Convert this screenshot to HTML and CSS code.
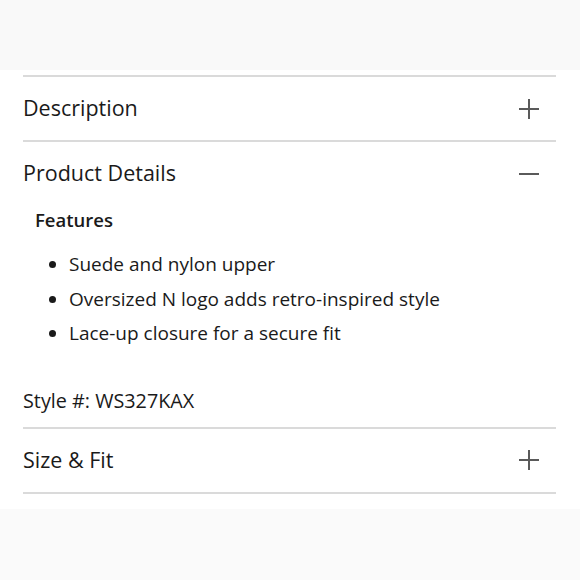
FILE: index.html
```html
<!DOCTYPE html>
<html lang="en">
<head>
<meta charset="utf-8">
<link rel="stylesheet" href="styles.css">
</head>
<body>
<div class="top"></div>
<div class="panel">
  <div class="item">
    <div class="head"><span class="title">Description</span><span class="icon plus"></span></div>
  </div>
  <div class="item">
    <div class="head"><span class="title">Product Details</span><span class="icon minus"></span></div>
    <div class="body">
      <h3 class="feat">Features</h3>
      <ul class="list">
        <li>Suede and nylon upper</li>
        <li>Oversized N logo adds retro-inspired style</li>
        <li>Lace-up closure for a secure fit</li>
      </ul>
      <p class="style">Style #: WS327KAX</p>
    </div>
  </div>
  <div class="item last">
    <div class="head"><span class="title">Size &amp; Fit</span><span class="icon plus"></span></div>
  </div>
</div>
</body>
</html>
```
FILE: styles.css
```css
html, body { margin: 0; padding: 0; }
body {
  background: #fafafa;
  font-family: "Open Sans", Lato, sans-serif;
  color: #1a1a1a;
  width: 580px;
  height: 580px;
  overflow: hidden;
}
.top { height: 70px; background: #f9f9f9; }
.panel {
  background: #fff;
  padding: 5px 24px 15px 23px;
}
.item { border-top: 2px solid #dadada; }
.item.last { border-bottom: 2px solid #dadada; }
.head {
  height: 63px;
  display: flex;
  align-items: center;
  justify-content: space-between;
}
.title { font-size: 21.5px; font-weight: 400; line-height: 26px; margin-top: -1px; }
.icon { position: relative; width: 20px; height: 20px; margin-right: 17px; }
.icon::before, .icon::after {
  content: ""; position: absolute; background: #5a5a5a;
}
.icon::before { left: 0; right: 0; top: 9px; height: 2px; }
.plus::after { top: 0; bottom: 0; left: 9px; width: 2px; }
.minus::after { display: none; }
.body { padding: 3px 0 14px 12px; }
.feat { margin: 0; font-size: 18.5px; font-weight: 600; line-height: 24px; }
.list { margin: 15px 0 0; padding: 0 0 0 34px; font-size: 19px; line-height: 34.5px; }
.list li { padding-left: 0; }
.style { margin: 38px 0 0 -12px; font-size: 19.8px; line-height: 24px; }
```
